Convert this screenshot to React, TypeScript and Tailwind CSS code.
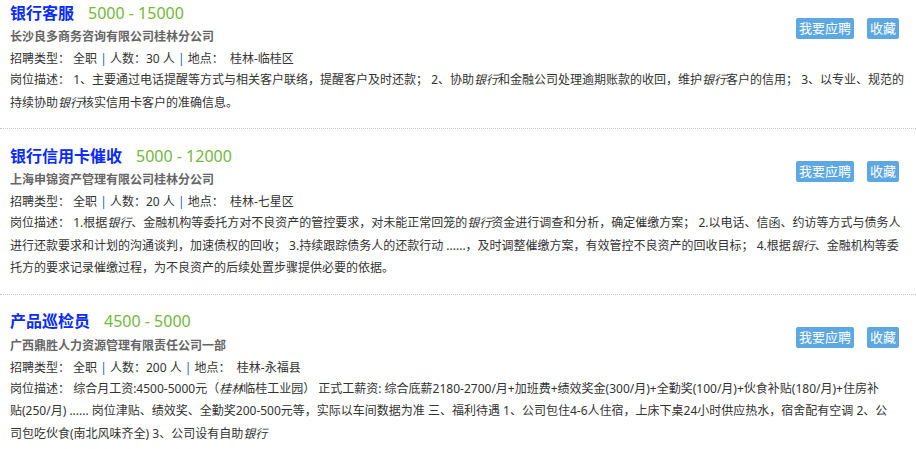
import React from 'react';

type Part = string | { em: string } | { br: true };

type Job = {
  id: number;
  title: string;
  salary: string;
  company: string;
  count: number;
  place: string;
  desc: Part[];
};

const jobs: Job[] = [
  {
    id: 1,
    title: '银行客服',
    salary: '5000 - 15000',
    company: '长沙良多商务咨询有限公司桂林分公司',
    count: 30,
    place: '桂林-临桂区',
    desc: [
      '1、主要通过电话提醒等方式与相关客户联络，提醒客户及时还款； 2、协助',
      { em: '银行' },
      '和金融公司处理逾期账款的收回，维护',
      { em: '银行' },
      '客户的信用； 3、以专业、规范的持续协助',
      { em: '银行' },
      '核实信用卡客户的准确信息。',
    ],
  },
  {
    id: 2,
    title: '银行信用卡催收',
    salary: '5000 - 12000',
    company: '上海申锦资产管理有限公司桂林分公司',
    count: 20,
    place: '桂林-七星区',
    desc: [
      '1.根据',
      { em: '银行' },
      '、金融机构等委托方对不良资产的管控要求，对未能正常回笼的',
      { em: '银行' },
      '资金进行调查和分析，确定催缴方案； 2.以电话、信函、约访等方式与债务人进行还款要求和计划的沟通谈判，加速债权的回收； 3.持续跟踪债务人的还款行动 ......，及时调整催缴方案，有效管控不良资产的回收目标； 4.根据',
      { em: '银行' },
      '、金融机构等委托方的要求记录催缴过程，为不良资产的后续处置步骤提供必要的依据。',
    ],
  },
  {
    id: 3,
    title: '产品巡检员',
    salary: '4500 - 5000',
    company: '广西鼎胜人力资源管理有限责任公司一部',
    count: 200,
    place: '桂林-永福县',
    desc: [
      '综合月工资:4500-5000元（',
      { em: '桂林' },
      '临桂工业园） 正式工薪资: 综合底薪2180-2700/月+加班费+绩效奖金(300/月)+全勤奖(100/月)+伙食补贴(180/月)+住房补',
      { br: true },
      '贴(250/月) ...... 岗位津贴、绩效奖、全勤奖200-500元等，实际以车间数据为准 三、福利待遇 1、公司包住4-6人住宿，上床下桌24小时供应热水，宿舍配有空调 2、公',
      { br: true },
      '司包吃伙食(南北风味齐全) 3、公司设有自助',
      { em: '银行' },
    ],
  },
];

const JobItem = ({ job, first }: { job: Job; first: boolean }) => {
  return (
    <div
      className={
        first
          ? 'pt-[14px] pb-[14px]'
          : 'pt-[14px] pb-[14px] border-t border-dotted border-[#c8c8c8]'
      }
    >
      <div className="flex px-[10px]">
        <div className="flex-1">
          <div className="flex items-center h-[25px]">
            <span className="text-[16px] font-bold text-[#0a2bff]">{job.title}</span>
            <span className="ml-[14px] text-[16px] text-[#72b83c]">{job.salary}</span>
          </div>
          <div className="text-[12px] leading-[24px] font-bold text-[#666]">{job.company}</div>
        </div>
        <div className="flex gap-[13px] mt-[18px] mr-[7px] self-start">
          <button className="h-[21px] px-[3px] rounded-[2px] bg-[#5ea8e2] text-white text-[13px] leading-[21px]">
            我要应聘
          </button>
          <button className="h-[21px] px-[3px] rounded-[2px] bg-[#5ea8e2] text-white text-[13px] leading-[21px]">
            收藏
          </button>
        </div>
      </div>
      <div className="px-[10px] text-[12px] leading-[20px] text-[#333]">
        招聘类型： 全职 <span className="text-[#1d5fae]">|</span> 人数：{job.count} 人{' '}
        <span className="text-[#1d5fae]">|</span> 地点：&nbsp; {job.place}
      </div>
      <p className="px-[10px] text-[12px] leading-[22.5px] text-[#333]">
        岗位描述：{' '}
        {job.desc.map((part, i) => {
          if (typeof part === 'string') return <span key={i}>{part}</span>;
          if ('br' in part) return <br key={i} />;
          return (
            <em key={i} className="italic">
              {part.em}
            </em>
          );
        })}
      </p>
    </div>
  );
};

export default function App() {
  return (
    <div
      className="w-[916px] h-[449px] overflow-hidden bg-white"
      style={{ fontFamily: '"Noto Sans", "Noto Sans CJK SC", sans-serif' }}
    >
      <div className="-mt-[14px]">
        {jobs.map((job, i) => (
          <JobItem key={job.id} job={job} first={i === 0} />
        ))}
      </div>
    </div>
  );
}
